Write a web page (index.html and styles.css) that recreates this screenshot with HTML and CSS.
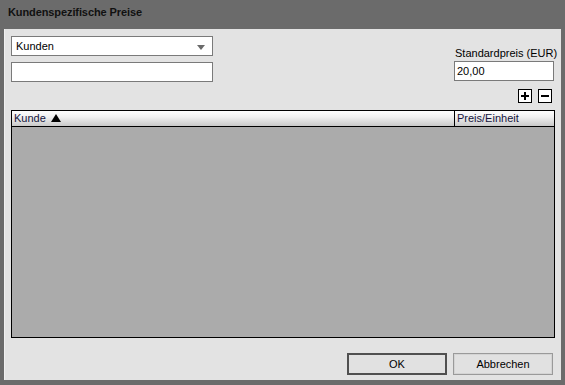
FILE: index.html
```html
<!DOCTYPE html>
<html>
<head>
<meta charset="utf-8">
<link rel="stylesheet" href="styles.css">
</head>
<body>
<div class="window">
  <div class="titlebar">Kundenspezifische Preise</div>
  <div class="client">
    <div class="top">
      <div class="left-col">
        <div class="combo"><span>Kunden</span><span class="arrow"></span></div>
        <div class="textbox"></div>
      </div>
      <div class="right-col">
        <div class="label">Standardpreis (EUR)</div>
        <div class="textbox small">20,00</div>
        <div class="pm">
          <span class="pmbtn"><svg width="10" height="10" viewBox="0 0 10 10"><path d="M5 1V9M1 5H9" stroke="#000" stroke-width="2"/></svg></span>
          <span class="pmbtn"><svg width="10" height="10" viewBox="0 0 10 10"><path d="M1 5H9" stroke="#000" stroke-width="2"/></svg></span>
        </div>
      </div>
    </div>
    <div class="grid">
      <div class="ghead">
        <div class="hcell c1">Kunde <span class="sort"></span></div>
        <div class="hcell c2">Preis/Einheit</div>
      </div>
      <div class="gbody"></div>
    </div>
    <div class="buttons">
      <div class="btn default">OK</div>
      <div class="btn">Abbrechen</div>
    </div>
  </div>
</div>
</body>
</html>
```
FILE: styles.css
```css
html, body { margin: 0; padding: 0; }
body {
  width: 565px; height: 385px; overflow: hidden;
  font-family: "Liberation Sans", Arial, sans-serif;
  font-size: 11px; color: #000;
  background: #6b6b6b;
}
.window {
  width: 565px; height: 385px; box-sizing: border-box;
  background: #6b6b6b;
  padding: 0 4px 5px 4px;
  display: flex; flex-direction: column;
}
.titlebar {
  height: 29px; box-sizing: border-box;
  padding: 6px 0 0 4px;
  font-weight: bold; font-size: 11px; letter-spacing: -0.1px; color: #111;
}
.client {
  flex: 1; background: #e3e3e3;
  box-sizing: border-box;
  padding: 7px 7px 0 6px;
  display: flex; flex-direction: column;
  border-left: 1px solid #f0f0f0;
}
.top { display: flex; justify-content: space-between; height: 67px; }
.left-col { width: 202px; display: flex; flex-direction: column; gap: 6px; }
.combo, .textbox {
  height: 20px; box-sizing: border-box;
  border: 1px solid #7a7a7a; background: #fff;
  padding: 3px 0 0 4px;
}
.combo { display: flex; justify-content: space-between; align-items: flex-start; }
.arrow {
  width: 0; height: 0; margin: 5px 7px 0 0;
  border-left: 4px solid transparent; border-right: 4px solid transparent;
  border-top: 5px solid #6a6a6a;
}
.right-col { width: 100px; display: flex; flex-direction: column; }
.label { margin-top: 10px; height: 15px; line-height: 14px; padding-left: 1px; white-space: nowrap; }
.textbox.small { padding: 3px 0 0 2px; }
.pm { display: flex; justify-content: flex-end; gap: 6px; margin-top: 8px; margin-right: 2px; }
.pmbtn {
  width: 14px; height: 14px; box-sizing: border-box;
  border: 1px solid #000; background: #fff;
  display: flex; align-items: center; justify-content: center;
}
.grid {
  margin-top: 7px;
  width: 544px; height: 228px; box-sizing: border-box;
  border: 1px solid #000; background: #ababab;
  display: flex; flex-direction: column;
}
.ghead {
  height: 16px; box-sizing: border-box;
  border-bottom: 1px solid #000;
  background: linear-gradient(#fdfdfd, #f0f0f0 40%, #c9c9c9);
  display: flex;
}
.hcell { line-height: 15px; padding-left: 2px; color: #14143c; }
.c1 { width: 440px; border-right: 1px solid #000; }
.c2 { flex: 1; }
.sort {
  display: inline-block; width: 0; height: 0; margin-left: 2px; vertical-align: 0px;
  border-left: 5px solid transparent; border-right: 5px solid transparent;
  border-bottom: 8px solid #000;
}
.gbody { flex: 1; }
.buttons { display: flex; justify-content: flex-end; gap: 6px; margin-top: 15px; padding-right: 1px; }
.btn {
  width: 100px; height: 22px; box-sizing: border-box;
  border: 1px solid #9a9a9a; background: #e1e1e1;
  box-shadow: inset 0 0 0 1px #d4d4d4;
  display: flex; align-items: center; justify-content: center;
}
.btn.default { border: 2px solid #505050; box-shadow: none; }
```
